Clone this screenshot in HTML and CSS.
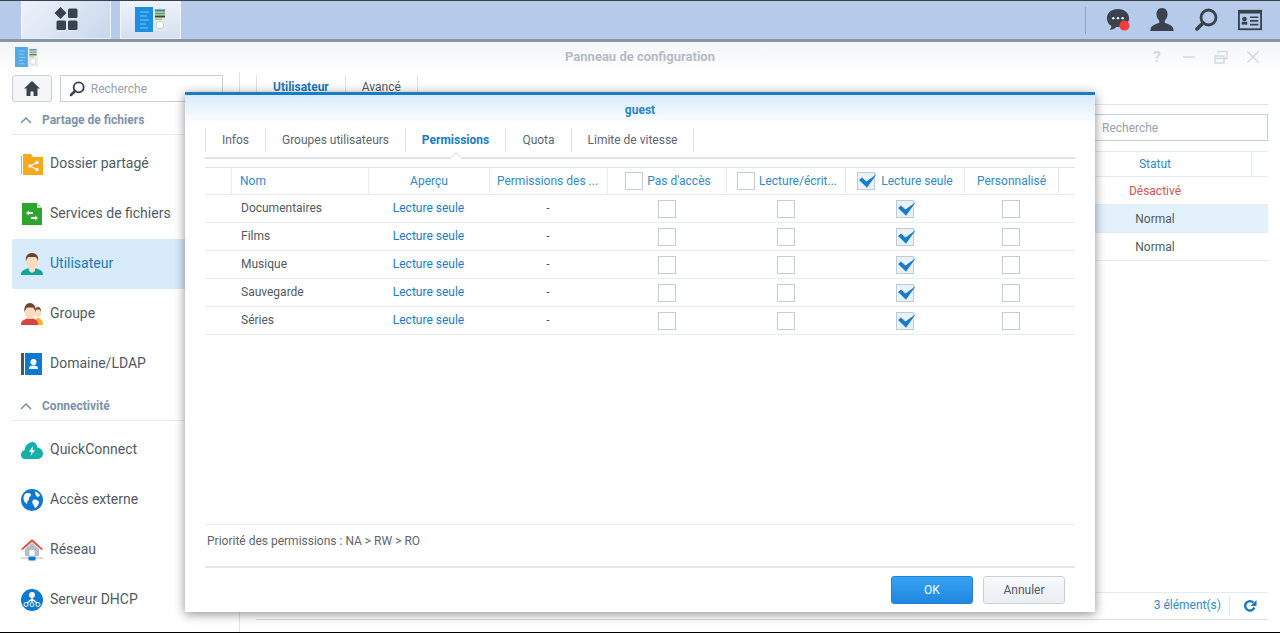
FILE: index.html
```html
<!DOCTYPE html>
<html lang="fr">
<head>
<meta charset="utf-8">
<title>Panneau de configuration</title>
<link rel="stylesheet" href="styles.css">
</head>
<body>
<svg class="defs" width="0" height="0" aria-hidden="true">
  <defs>
    <symbol id="panel" viewBox="0 0 32 25" preserveAspectRatio="none">
      <rect x="0" y="0" width="18" height="25" fill="#1d8fe0"/>
      <rect x="18" y="1" width="14" height="23" fill="#e6e9ea"/>
      <rect x="20" y="2.500" width="10" height="2" fill="#2f7f9e"/>
      <rect x="20" y="5.500" width="10" height="2" fill="#5aa84a"/>
      <rect x="20" y="8.500" width="10" height="2" fill="#37424f"/>
      <rect x="20" y="11.500" width="7" height="1.500" fill="#b9c24a"/>
      <circle cx="25" cy="18" r="3.800" fill="#fbfcfc" stroke="#c6ccd0"/>
      <path d="M5 5h9M5 9h7M5 13h9M5 17h6M5 21h8" stroke="#7cc4f2" stroke-width="1"/>
    </symbol>
    <symbol id="glass" viewBox="0 0 24 24">
      <circle cx="14.500" cy="9.500" r="7.500" fill="none" stroke="currentColor" stroke-width="2.800"/>
      <path d="M9 15L3 21" stroke="currentColor" stroke-width="3.800" stroke-linecap="round"/>
    </symbol>
    <symbol id="box" viewBox="0 0 18 18">
      <rect x=".5" y=".5" width="17" height="17" fill="#fff" stroke="#c6ced4"/>
    </symbol>
    <symbol id="boxchk" viewBox="0 0 20 18">
      <rect x=".5" y=".5" width="17" height="17" fill="#e8f2f9" stroke="#bfcbd6"/>
      <path d="M2 8L5 5.500 9.500 9.500 19.800 2 10 15.800z" fill="#1b7dc8"/>
    </symbol>
  </defs>
</svg>

<header class="taskbar">
  <div class="task-start">
    <svg class="ico-apps" viewBox="0 0 24 24"><path d="M6.500 0l6 6-6 6-6-6z" fill="#39424e"/><rect x="14" y="1.500" width="9.500" height="9.500" rx="1.500" fill="#39424e"/><rect x="2.500" y="13.500" width="9.500" height="9.500" rx="1.500" fill="#39424e"/><rect x="14" y="13.500" width="9.500" height="9.500" rx="1.500" fill="#39424e"/></svg>
  </div>
  <div class="task-app"><svg class="ico-panel-task"><use href="#panel"/></svg></div>
  <div class="task-tray">
    <svg class="tray-ico" viewBox="0 0 26 26"><path d="M13 1C6 1 1 5 1 11c0 4 2 7 5 8.500-.2 1.500-1 3-2 4 3 0 5.500-1 7-3 .7.1 1.300.2 2 .2 7 0 12-4.200 12-9.700S20 1 13 1z" fill="#39424e"/><circle cx="8" cy="11" r="1.300" fill="#fff"/><circle cx="13" cy="11" r="1.300" fill="#fff"/><circle cx="18" cy="11" r="1.300" fill="#fff"/><circle cx="20" cy="19" r="5.500" fill="#f23c3c"/></svg>
    <svg class="tray-ico" viewBox="0 0 26 26"><path d="M13 0c-4 0-6 3-6 6.500 0 3 1 5.500 3 7v2.500c-3 1.500-9 2.500-9.500 7.500V25h25v-1.500c-.5-5-6.500-6-9.500-7.500v-2.500c2-1.500 3-4 3-7C19 3 17 0 13 0z" fill="#39424e"/></svg>
    <svg class="tray-ico"><use href="#glass"/></svg>
    <svg class="tray-ico" viewBox="0 0 26 22"><rect x="1" y="1" width="24" height="20" fill="none" stroke="#39424e" stroke-width="2"/><rect x="1" y="1" width="24" height="3" fill="#39424e"/><circle cx="7" cy="10" r="2.500" fill="#39424e"/><rect x="4" y="13" width="6" height="3" fill="#39424e"/><path d="M13 8h9M13 12h9M13 16h9" stroke="#39424e" stroke-width="1.800"/></svg>
  </div>
</header>

<main class="window">
  <div class="win-title">
    <svg class="win-logo"><use href="#panel"/></svg>
    <span class="win-name">Panneau de configuration</span>
    <div class="win-actions">
      <span class="win-q">?</span>
      <svg class="win-btn" viewBox="0 0 14 14"><path d="M1 7h12" stroke="#d4d9dd" stroke-width="1.500"/></svg>
      <svg class="win-btn" viewBox="0 0 14 14"><path d="M1 6h9v7H1zM1 8.500h9M4 3.500V1.500h9v7h-3" fill="none" stroke="#d4d9dd" stroke-width="1.300"/></svg>
      <svg class="win-btn" viewBox="0 0 14 14"><path d="M1.500 1.500l11 11M12.500 1.500l-11 11" stroke="#d4d9dd" stroke-width="1.500"/></svg>
    </div>
  </div>

  <div class="win-body">
    <aside class="sidebar">
      <div class="side-tools">
        <button class="home-btn" type="button"><svg viewBox="0 0 16 15"><path d="M8 0L0 7.500h2.500V15h4v-4.500h3V15h4V7.500H16z" fill="#39424e"/></svg></button>
        <div class="side-search"><svg class="glass-small"><use href="#glass"/></svg><span>Recherche</span></div>
      </div>
      <div class="side-head"><svg class="chev" viewBox="0 0 12 7"><path d="M1 6l5-5 5 5" fill="none" stroke="#7b93a8" stroke-width="1.500"/></svg>Partage de fichiers</div>
      <ul class="side-list">
        <li class="side-item"><svg class="side-ico" viewBox="0 0 22 22"><path d="M0 3h1v18H0z" fill="#f7a81b"/><path d="M2 1h8l2 3h10v18H2z" fill="#f7a81b"/><circle cx="9" cy="13" r="1.700" fill="#fff"/><circle cx="16" cy="9.500" r="1.700" fill="#fff"/><circle cx="16" cy="16.500" r="1.700" fill="#fff"/><path d="M9 13l7-3.500M9 13l7 3.500" stroke="#fff" stroke-width="1.200"/></svg><span class="label">Dossier partagé</span></li>
        <li class="side-item"><svg class="side-ico" viewBox="0 0 22 22"><path d="M1 0h15l5 5v17H1z" fill="#2ea52e"/><path d="M16 0l5 5h-5z" fill="#bfe6bf"/><path d="M5 10l3-2.500V9h4v2H8v1.500zM17 15l-3 2.500V16h-4v-2h4v-1.500z" fill="#fff"/></svg><span class="label">Services de fichiers</span></li>
        <li class="side-item active"><svg class="side-ico" viewBox="0 0 22 22"><path d="M0 22c0-5 4-5.500 7-6.500h8c3 1 7 1.500 7 6.500z" fill="#17a39c"/><path d="M8 15h6v3l-3 2-3-2z" fill="#fbe0c8"/><ellipse cx="11" cy="8.500" rx="6" ry="7.500" fill="#fbdcc0"/><path d="M5 8C4 3 7 0 11 0s7 3 6 8c-1-3-2-4-3-4H8C7 4 6 5 5 8z" fill="#6d4526"/></svg><span class="label">Utilisateur</span></li>
        <li class="side-item"><svg class="side-ico" viewBox="0 0 22 22"><path d="M14 10c0-3 1-5 3-5s3 2 3 5-1 4-3 4-3-1-3-4z" fill="#fbdcc0"/><path d="M14 9c-.5-3 1-5 3-5s3.500 2 3 5c-.5-2-1-2.500-3-2.500S14.500 7 14 9z" fill="#6d4526"/><path d="M12 22c1-5 3-7 5-7s5 2 5 7z" fill="#f3b12e"/><path d="M0 22c0-5 3-5 6-6.500h6c3 1.500 5 1.500 5 6.500z" fill="#d8433f"/><ellipse cx="9" cy="9" rx="5.500" ry="7" fill="#fbdcc0"/><path d="M3.500 9C2.500 3 6 0 9 0s6.500 3 5.500 9c-1-3-2-4.500-3-4.500h-5C5.500 4.500 4.500 6 3.500 9z" fill="#6d4526"/></svg><span class="label">Groupe</span></li>
        <li class="side-item"><svg class="side-ico" viewBox="0 0 22 22"><rect x="0" y="0" width="3" height="22" fill="#4b5460"/><rect x="4" y="0" width="17" height="22" fill="#0f79cf"/><circle cx="12.500" cy="9" r="3" fill="#fff"/><path d="M8 16c0-3 2-3.500 4.500-3.500S17 13 17 16z" fill="#fff"/></svg><span class="label">Domaine/LDAP</span></li>
      </ul>
      <div class="side-head head-2"><svg class="chev" viewBox="0 0 12 7"><path d="M1 6l5-5 5 5" fill="none" stroke="#7b93a8" stroke-width="1.500"/></svg>Connectivité</div>
      <ul class="side-list">
        <li class="side-item"><svg class="side-ico" viewBox="0 0 22 22"><path d="M4 20C1 20 0 17.500 0 15.500c0-2.500 2-4 3.500-4.300C4 6 8 3 12 3c2.500 0 4 2.500 4.500 5.500 3 .5 5.500 3 5.500 6 0 3-2.500 5.500-5 5.500z" fill="#14b0a6"/><path d="M12 7l-4 6h2.500L9.500 17l4.500-6h-2.500z" fill="#fff"/></svg><span class="label">QuickConnect</span></li>
        <li class="side-item"><svg class="side-ico" viewBox="0 0 22 22"><circle cx="11" cy="11" r="11" fill="#0f79cf"/><path d="M4 5c2-1.500 4-1 6 0 0 2-1 3-2 3.500.5 2-.5 3-1.500 3.500L6 15c-2-1-3.500-3-3.500-5.500C2.500 8 3 6 4 5zM12 11c2-1 5 0 6 2 0 2-2 5-4 6-1-1-1-3-2-4s-1-3 0-4zM14 2.500c2 .5 4 2 5 4l-2 1.500-2-1z" fill="#fff"/></svg><span class="label">Accès externe</span></li>
        <li class="side-item"><svg class="side-ico" viewBox="0 0 22 22"><path d="M0 10L11 0l11 10-1.500 1L11 3 1.500 11z" fill="#e2504a"/><path d="M4 10l7-6 7 6v7H4z" fill="#b5bec8"/><rect x="8.500" y="11" width="5" height="6" fill="#fff"/><path d="M0 19h22" stroke="#aab3bc"/><rect x="7.500" y="17.500" width="7" height="4" fill="#0f79cf"/></svg><span class="label">Réseau</span></li>
        <li class="side-item"><svg class="side-ico" viewBox="0 0 22 22"><circle cx="11" cy="11" r="11" fill="#0f79cf"/><circle cx="11" cy="6" r="3" fill="#fff"/><path d="M11 8v5M11 10l-5 4M11 10l5 4" stroke="#fff" stroke-width="1.200"/><circle cx="5" cy="15.500" r="2" fill="none" stroke="#fff"/><circle cx="11" cy="15.500" r="2" fill="none" stroke="#fff"/><circle cx="17" cy="15.500" r="2" fill="none" stroke="#fff"/></svg><span class="label">Serveur DHCP</span></li>
      </ul>
    </aside>

    <section class="content">
      <nav class="main-tabs"><span class="main-tab current">Utilisateur</span><span class="main-tab">Avancé</span></nav>
      <div class="main-tools"><div class="main-search">Recherche</div></div>
      <div class="bg-table">
        <div class="bg-row bg-header"><span class="bg-cell">Statut</span><span class="bg-end"></span></div>
        <div class="bg-row"><span class="bg-cell red">Désactivé</span></div>
        <div class="bg-row selected"><span class="bg-cell">Normal</span></div>
        <div class="bg-row"><span class="bg-cell">Normal</span></div>
      </div>
      <div class="main-footer"><span class="count">3 élément(s)</span><span class="foot-sep"></span><svg class="refresh" viewBox="0 0 14 14"><path d="M11.300 8.500A4.700 4.700 0 1 1 10.300 3.600" fill="none" stroke="#1a78bd" stroke-width="2.400"/><path d="M13.500 1v6h-6z" fill="#1a78bd"/></svg></div>
    </section>
  </div>
</main>

<div class="dialog">
  <div class="dlg-head">guest</div>
  <div class="dlg-body">
    <nav class="dlg-tabs">
      <span class="dlg-tab tab-a">Infos</span>
      <span class="dlg-tab tab-b">Groupes utilisateurs</span>
      <span class="dlg-tab tab-c current">Permissions</span>
      <span class="dlg-tab tab-d">Quota</span>
      <span class="dlg-tab tab-e">Limite de vitesse</span>
    </nav>
    <div class="grid">
      <div class="g-row g-head">
        <span class="g-c"></span>
        <span class="g-c left">Nom</span>
        <span class="g-c">Aperçu</span>
        <span class="g-c trim">Permissions des ...</span>
        <span class="g-c"><svg class="hbox"><use href="#box"/></svg>Pas d'accès</span>
        <span class="g-c"><svg class="hbox"><use href="#box"/></svg>Lecture/écrit...</span>
        <span class="g-c"><svg class="hbox chk"><use href="#boxchk"/></svg>Lecture seule</span>
        <span class="g-c">Personnalisé</span>
        <span class="g-c"></span>
      </div>
      <div class="g-row">
        <span></span><span class="name">Documentaires</span><span class="link">Lecture seule</span><span>-</span>
        <span class="cb"><svg class="rbox"><use href="#box"/></svg></span><span class="cb"><svg class="rbox"><use href="#box"/></svg></span><span class="cb"><svg class="rbox chk"><use href="#boxchk"/></svg></span><span class="cb"><svg class="rbox"><use href="#box"/></svg></span><span></span>
      </div>
      <div class="g-row">
        <span></span><span class="name">Films</span><span class="link">Lecture seule</span><span>-</span>
        <span class="cb"><svg class="rbox"><use href="#box"/></svg></span><span class="cb"><svg class="rbox"><use href="#box"/></svg></span><span class="cb"><svg class="rbox chk"><use href="#boxchk"/></svg></span><span class="cb"><svg class="rbox"><use href="#box"/></svg></span><span></span>
      </div>
      <div class="g-row">
        <span></span><span class="name">Musique</span><span class="link">Lecture seule</span><span>-</span>
        <span class="cb"><svg class="rbox"><use href="#box"/></svg></span><span class="cb"><svg class="rbox"><use href="#box"/></svg></span><span class="cb"><svg class="rbox chk"><use href="#boxchk"/></svg></span><span class="cb"><svg class="rbox"><use href="#box"/></svg></span><span></span>
      </div>
      <div class="g-row">
        <span></span><span class="name">Sauvegarde</span><span class="link">Lecture seule</span><span>-</span>
        <span class="cb"><svg class="rbox"><use href="#box"/></svg></span><span class="cb"><svg class="rbox"><use href="#box"/></svg></span><span class="cb"><svg class="rbox chk"><use href="#boxchk"/></svg></span><span class="cb"><svg class="rbox"><use href="#box"/></svg></span><span></span>
      </div>
      <div class="g-row">
        <span></span><span class="name">Séries</span><span class="link">Lecture seule</span><span>-</span>
        <span class="cb"><svg class="rbox"><use href="#box"/></svg></span><span class="cb"><svg class="rbox"><use href="#box"/></svg></span><span class="cb"><svg class="rbox chk"><use href="#boxchk"/></svg></span><span class="cb"><svg class="rbox"><use href="#box"/></svg></span><span></span>
      </div>
    </div>
    <p class="dlg-note">Priorité des permissions : NA &gt; RW &gt; RO</p>
    <div class="dlg-foot">
      <button class="btn ok" type="button">OK</button>
      <button class="btn cancel" type="button">Annuler</button>
    </div>
  </div>
</div>
</body>
</html>
```
FILE: styles.css
```css
* { box-sizing: border-box; }
html, body { margin: 0; height: 100%; }
body {
  width: 1280px; height: 633px; overflow: hidden; position: relative;
  display: flex; flex-direction: column;
  font-family: Roboto, "Liberation Sans", sans-serif;
  font-size: 12px; color: #505a64; background: #000;
}
.defs { position: absolute; }
ul { list-style: none; margin: 0; padding: 0; }
p { margin: 0; }

/* taskbar */
.taskbar {
  flex: 0 0 42px; display: flex; align-items: stretch;
  padding-left: 21px;
  background: #b5cbe9;
  border-top: 1px solid #39424e;
  border-bottom: 3px solid #8a96a4;
}
.task-start, .task-app {
  display: flex; align-items: center; justify-content: center;
  border-left: 1px solid #f2f6fb; border-right: 1px solid #f2f6fb;
  border-bottom: 1px solid #e8eef7;
  background: linear-gradient(135deg, #eef3fa, #c8d7ec);
}
.task-start { width: 90px; }
.task-app { width: 61px; margin-left: 9px; background: linear-gradient(180deg, #eef3fa, #d4e0f1); }
.ico-apps { width: 24px; height: 24px; margin-top: -1px; }
.ico-panel-task { width: 32px; height: 25px; }
.task-tray { margin-left: auto; display: flex; align-items: center; gap: 20px; padding-right: 18px; height: 38px; }
.task-tray::before { content: ""; width: 1px; height: 27px; background: #8fa3bd; }
.tray-ico { width: 24px; height: 24px; color: #39424e; }

/* window */
.window {
  flex: 0 0 590px; display: flex; flex-direction: column; background: #fff;
}
.win-title {
  flex: 0 0 30px; display: flex; align-items: center; position: relative;
  padding-left: 15px;
  background: linear-gradient(180deg, #f2f4f6, #fff);
}
.win-logo { width: 23px; height: 20px; opacity: .75; }
.win-name {
  position: absolute; left: 0; right: 0; top: 7px; text-align: center;
  font-size: 13px; font-weight: 700; color: #b4bcc4; line-height: 16px;
}
.win-actions { margin-left: auto; display: flex; align-items: center; gap: 18px; padding-right: 20px; }
.win-q { width: 14px; text-align: center; color: #d4d9dd; font-size: 15px; font-weight: 700; line-height: 14px; }
.win-btn { width: 14px; height: 14px; }
.win-body { flex: 1; display: flex; min-height: 0; }

/* sidebar */
.sidebar {
  flex: 0 0 240px; padding: 3px 16px 0 12px; border-right: 1px solid #dfe3e7;
  overflow: hidden;
}
.side-tools { display: flex; gap: 8px; height: 27px; }
.home-btn {
  width: 40px; height: 27px; padding: 0; display: flex; align-items: center; justify-content: center;
  border: 1px solid #c8d0d8; border-radius: 3px; background: #f4f6f8;
}
.home-btn svg { width: 16px; height: 15px; }
.side-search {
  width: 164px; display: flex; align-items: center; gap: 6px; padding-left: 8px;
  border: 1px solid #c8d0d8; color: #9aa2aa;
}
.glass-small { width: 16px; height: 16px; color: #39424e; }
.side-head {
  height: 32px; margin-top: 1px; padding: 3px 0 0 8px; display: flex; align-items: center; gap: 10px;
  border-bottom: 1px solid #e8ecef;
  font-weight: 700; color: #7b93a8; width: 212px;
}
.head-2 { margin-top: 0; }
.chev { width: 12px; height: 7px; margin-top: 1px; }
.side-list { margin-top: 4px; }
.side-item {
  width: 228px; height: 50px; display: flex; align-items: center; gap: 7px; padding-left: 9px;
  font-size: 14px; color: #505a64; border-radius: 3px 0 0 3px;
}
.label { margin-bottom: 2px; }
.side-item.active { background: #d8ebfb; color: #1a78bd; }
.side-ico { width: 22px; height: 22px; flex: none; }

/* content behind the dialog */
.content { flex: 1; display: flex; flex-direction: column; padding: 0 12px 0 16px; min-width: 0; }
.main-tabs { height: 33px; padding-top: 3px; display: flex; align-items: flex-start; border-bottom: 1px solid #dfe3e7; }
.main-tab { height: 21px; line-height: 24px; padding: 0 16px; border-left: 1px solid #dfe3e7; color: #505a64; }
.main-tab:last-child { border-right: 1px solid #dfe3e7; }
.main-tab.current { color: #1a78bd; font-weight: 700; }
.main-tools { height: 46px; padding-top: 9px; display: flex; justify-content: flex-end; }
.main-search {
  width: 180px; height: 27px; line-height: 27px; padding-left: 13px;
  border: 1px solid #c8d0d8; color: #9aa2aa;
}
.bg-table { flex: 1; }
.bg-row { height: 28px; display: flex; justify-content: flex-end; align-items: center; border-bottom: 1px solid #e6ebef; }
.bg-header { height: 26px; border-top: 1px solid #e6ebef; color: #2f8ac8; position: relative; }
.bg-end { position: absolute; right: 16px; top: 0; height: 25px; border-right: 1px solid #e6ebef; }
.bg-cell { width: 100px; margin-right: 63px; text-align: center; }
.red { color: #d9534f; }
.selected { background: #e3f1fc; }
.main-footer {
  flex: 0 0 28px; margin-bottom: 12px; display: flex; align-items: center; justify-content: flex-end;
  border-top: 1px solid #e6ebef; border-bottom: 1px solid #d9e2ea; color: #2f8ac8;
}
.count { margin-bottom: 2px; }
.foot-sep { height: 20px; border-left: 1px solid #e6ebef; margin: 0 13px 0 8px; }
.refresh { width: 14px; height: 14px; margin-right: 11px; }

/* dialog */
.dialog {
  position: absolute; left: 185px; top: 92px; width: 910px; height: 520px;
  background: #fff; display: flex; flex-direction: column;
  border-top: 3px solid #1a7cc4;
  box-shadow: 0 2px 10px rgba(0,0,0,.45);
}
.dlg-head {
  flex: 0 0 30px; text-align: center; line-height: 30px; font-weight: 700; font-size: 12px; color: #1f85cf;
  background: linear-gradient(180deg, #d8ebfb, #fff);
}
.dlg-body { flex: 1; display: flex; flex-direction: column; padding: 0 20px; }
.dlg-tabs { height: 34px; padding-top: 3px; display: flex; align-items: flex-start; border-bottom: 2px solid #dfe3e7; }
.dlg-tab { height: 24px; line-height: 24px; text-align: center; border-left: 1px solid #dfe3e7; color: #5d666f; position: relative; }
.dlg-tab:last-child { border-right: 1px solid #dfe3e7; }
.dlg-tab.current { color: #1a7cc4; font-weight: 700; }
.dlg-tab.current::after {
  content: ""; position: absolute; left: 45px; top: 26px; width: 9px; height: 9px;
  background: #fff; border-left: 1px solid #dfe3e7; border-top: 1px solid #dfe3e7; transform: rotate(45deg);
}
.tab-a { width: 60px; } .tab-b { width: 140px; } .tab-c { width: 100px; } .tab-d { width: 66px; } .tab-e { width: 123px; }
.grid { flex: 1; margin-top: 8px; }
.g-row {
  display: grid; grid-template-columns: 27px 137px 121px 118px 119px 119px 119px 94px 16px;
  height: 28px; padding-bottom: 2px; align-items: center; text-align: center; border-bottom: 1px solid #e8ecef;
}
.g-row > span { padding-right: 2px; }
.g-head { padding-bottom: 0; border-top: 1px solid #e0e5e9; color: #2f8ac8; align-items: stretch; }
.g-head > .g-c { padding-right: 0; display: flex; align-items: center; justify-content: center; gap: 4px; border-right: 1px solid #e8ecef; white-space: nowrap; overflow: hidden; }
.g-head > .g-c:last-child { border-right: 0; }
.g-head > .g-c.left { justify-content: flex-start; padding-left: 8px; }
.g-head > .g-c.trim { padding-right: 2px; }
.name { text-align: left; padding-left: 9px; color: #505a64; }
.link { color: #1a7cc4; }
.cb { display: flex; justify-content: center; margin-top: 2px; }
.hbox { width: 18px; height: 18px; flex: none; margin-left: 2px; }
.hbox.chk { width: 20px; margin-left: 0; }
.rbox { width: 18px; height: 18px; }
.rbox.chk { width: 20px; margin-left: 2px; }
.dlg-note { height: 44px; line-height: 32px; padding-left: 2px; border-top: 1px solid #e8ecef; border-bottom: 2px solid #e4e8eb; color: #5d666f; }
.dlg-foot { flex: 0 0 44px; display: flex; justify-content: flex-end; gap: 10px; padding: 8px 10px 0 0; }
.btn { width: 82px; height: 28px; border-radius: 3px; font: inherit; padding: 0; }
.ok { background: linear-gradient(180deg, #36a2f2, #1f87e0); border: 1px solid #1f80d4; color: #fff; }
.cancel { background: linear-gradient(180deg, #f8fafb, #e9eef2); border: 1px solid #c8d0d8; color: #505a64; }
```
